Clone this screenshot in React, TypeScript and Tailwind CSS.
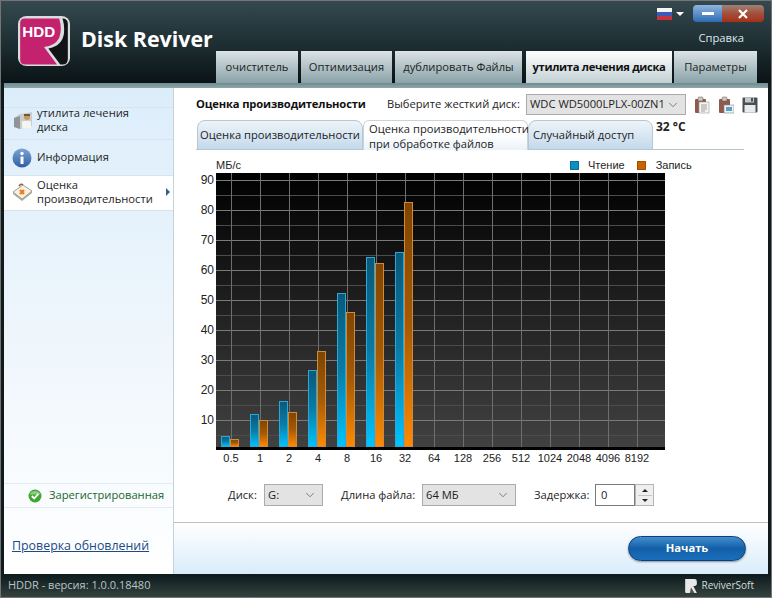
import { ChevronDown } from 'lucide-react'

const topTabs = [
  { label: 'очиститель', cls: 'w-[82px]' },
  { label: 'Оптимизация', cls: 'w-[91px] ml-[3px]' },
  { label: 'дублировать Файлы', cls: 'w-[127px] ml-[3px]' },
  { label: 'утилита лечения диска', cls: 'w-[146px] ml-[4px]', active: true },
  { label: 'Параметры', cls: 'w-[83px] ml-[2px]' },
]

const xLabels = ['0.5', '1', '2', '4', '8', '16', '32', '64', '128', '256', '512', '1024', '2048', '4096', '8192']
const yLabels = [90, 80, 70, 60, 50, 40, 30, 20, 10]

// y-координаты верха столбиков: чтение, запись
const bars: [number, number][] = [
  [436, 439],
  [414, 420],
  [401, 412],
  [370, 351],
  [293, 312],
  [257, 263],
  [252, 202],
]

function Logo() {
  return (
    <svg viewBox="9 6 48 50" preserveAspectRatio="none" className="w-[52px] h-[50px] shrink-0">
      <rect x="9" y="6" width="48" height="50" rx="8" fill="#d9dcdc" />
      <path d="M15 8.500Q11 8.500 11 13L11 50Q11 54.500 16 54.500L45 54.500L33 37Q43 36 47 28Q50 19 47 8.500Z" fill="#c4226f" />
      <path d="M50 8.500Q55 8.500 55 14L55 49Q55 54.500 50 54.500L48 54.500L37 38.500Q50 36 51.500 23Q52 14 50 8.500Z" fill="#101416" />
      <text x="13" y="27.500" fontSize="14" fontWeight="700" fill="#fff" fontFamily="'Liberation Sans', sans-serif">HDD</text>
    </svg>
  )
}

function FlagRu() {
  return (
    <svg viewBox="0 0 15 12" className="w-[15px] h-[12px]">
      <rect width="15" height="4" fill="#f4f4f4" />
      <rect y="4" width="15" height="4" fill="#3a5ab8" />
      <rect y="8" width="15" height="4" fill="#c8323c" />
    </svg>
  )
}

function DriveIcon() {
  return (
    <svg viewBox="0 0 22 22" className="w-[22px] h-[22px]">
      <path d="M2 9L8 5L20 3L20 17L8 20L2 18Z" fill="#c9cdd0" />
      <path d="M2 9L8 7L8 20L2 18Z" fill="#8f9498" />
      <rect x="10" y="12" width="9" height="7" rx="1" fill="#f4f4f0" />
      <circle cx="15" cy="8" r="3" fill="#c99a5c" />
      <rect x="12" y="5" width="6" height="2" fill="#6d5a3c" />
    </svg>
  )
}

function InfoIcon() {
  return (
    <svg viewBox="0 0 20 20" className="w-[20px] h-[20px]">
      <defs>
        <linearGradient id="infoBg" x1="0" y1="0" x2="0" y2="1">
          <stop offset="0" stopColor="#7da5d4" />
          <stop offset="1" stopColor="#2c5fa3" />
        </linearGradient>
      </defs>
      <circle cx="10" cy="10" r="9.500" fill="url(#infoBg)" />
      <circle cx="10" cy="5.500" r="1.700" fill="#fff" />
      <rect x="8.500" y="8.500" width="3" height="7.500" rx="0.500" fill="#fff" />
    </svg>
  )
}

function AidIcon() {
  return (
    <svg viewBox="0 0 22 22" className="w-[22px] h-[22px]">
      <path d="M7 5Q9 2 11 4" fill="none" stroke="#a05a30" strokeWidth="1.500" />
      <path d="M1 11L11 4L20 10L10 18Z" fill="#f6f2e6" stroke="#8a8a7a" strokeWidth="0.800" />
      <path d="M1 11L10 18L20 10L20 12L10 20L1 13Z" fill="#a8a89a" />
      <path d="M8 9L12 13M12 9L8 13" stroke="#ee7a1c" strokeWidth="2.400" />
    </svg>
  )
}

function CheckIcon() {
  return (
    <svg viewBox="0 0 14 14" className="w-[14px] h-[14px]">
      <circle cx="7" cy="7" r="6.500" fill="#3fa535" />
      <path d="M1.500 5.500A6 6 0 0 1 12.500 5.500Z" fill="#8bd07c" />
      <path d="M3.800 7L6.200 9.400L10.400 4.800" fill="none" stroke="#fff" strokeWidth="1.800" />
    </svg>
  )
}

function ClipDoc({ image }: { image?: boolean }) {
  return (
    <svg viewBox="0 0 16 18" className="w-[16px] h-[18px]">
      <rect x="1" y="3" width="11" height="14" rx="1" fill="#8f5a4c" />
      <rect x="4" y="1" width="5" height="4" rx="1" fill="#c8c8c0" stroke="#6a5a50" strokeWidth="0.500" />
      {image ? (
        <>
          <rect x="6" y="9" width="10" height="8" fill="#eef2f4" stroke="#7b8a90" strokeWidth="0.600" />
          <rect x="8" y="11" width="6" height="4" fill="#5aa0c8" />
        </>
      ) : (
        <>
          <rect x="5" y="6" width="10" height="11" fill="#f4f4f2" stroke="#9a9a9a" strokeWidth="0.600" />
          <path d="M7 9H13M7 11H13M7 13H13M7 15H11" stroke="#8a8a8a" strokeWidth="0.800" />
        </>
      )}
    </svg>
  )
}

function SaveIcon() {
  return (
    <svg viewBox="0 0 16 16" className="w-[16px] h-[16px]">
      <rect x="0.500" y="0.500" width="15" height="15" rx="1" fill="#4a4e52" />
      <rect x="3" y="0.500" width="9" height="5" fill="#c4c8cc" />
      <rect x="9" y="1" width="2" height="3.500" fill="#4a4e52" />
      <rect x="2.500" y="8" width="11" height="7.500" fill="#e8eaec" />
    </svg>
  )
}

function Chart() {
  const vLines = xLabels.map((_, i) => 231 + i * 29)
  const hLines = Array.from({ length: 18 }, (_, i) => 180 + i * 15)
  return (
    <svg viewBox="196 173 474 293" className="w-[474px] h-[293px] block">
      <defs>
        <linearGradient id="plotBg" x1="0" y1="0" x2="0" y2="1">
          <stop offset="0" stopColor="#000" />
          <stop offset="1" stopColor="#424242" />
        </linearGradient>
        <linearGradient id="readBar" x1="0" y1="0" x2="0" y2="1">
          <stop offset="0" stopColor="#0a5878" />
          <stop offset="0.5" stopColor="#0a7ba6" />
          <stop offset="1" stopColor="#00c4ff" />
        </linearGradient>
        <linearGradient id="writeBar" x1="0" y1="0" x2="0" y2="1">
          <stop offset="0" stopColor="#7f4500" />
          <stop offset="0.5" stopColor="#a55a05" />
          <stop offset="1" stopColor="#ff8a00" />
        </linearGradient>
      </defs>
      <rect x="216" y="173" width="449" height="277" fill="url(#plotBg)" />
      {hLines.map((y, i) => (
        <line key={y} x1="216" x2="665" y1={y + 0.5} y2={y + 0.5} stroke={i % 2 === 0 ? '#7a7a7a' : '#4c4c4c'} />
      ))}
      {vLines.map((x) => (
        <line key={x} x1={x + 0.5} x2={x + 0.5} y1="173" y2="447" stroke="#6e6e6e" />
      ))}
      <rect x="216" y="447" width="449" height="3" fill="#000" />
      {bars.map(([read, write], i) => {
        const x = 221 + i * 29
        return (
          <g key={i}>
            <rect x={x + 0.5} y={read + 0.5} width="8" height={446 - read} fill="url(#readBar)" stroke="#2aa9d8" />
            <rect x={x + 9.5} y={write + 0.5} width="8" height={446 - write} fill="url(#writeBar)" stroke="#d08a3a" />
          </g>
        )
      })}
      <g fontFamily="'Liberation Sans', sans-serif" fill="#222">
        {yLabels.map((v, i) => (
          <text key={v} x="214" y={184 + i * 30} fontSize="12" textAnchor="end">{v}</text>
        ))}
        {xLabels.map((l, i) => (
          <text key={l} x={231 + i * 29} y="462" fontSize="11" textAnchor="middle">{l}</text>
        ))}
      </g>
    </svg>
  )
}

function Combo({ value, cls }: { value: string; cls: string }) {
  return (
    <div className={`flex items-center justify-between bg-[#e3e3e3] border border-[#ababab] pl-[3px] pr-[5px] ${cls}`}>
      <span className="overflow-hidden whitespace-nowrap">{value}</span>
      <ChevronDown className="w-[14px] h-[14px] text-[#555] shrink-0" strokeWidth={1.200} />
    </div>
  )
}

export default function App() {
  return (
    <div className="w-[772px] h-[598px] flex flex-col bg-[#10191b] border border-[#747474] px-[3px] overflow-hidden text-[11.2px] text-[#1e1e1e] font-['Open_Sans',sans-serif]">
      {/* Шапка */}
      <div className="h-[82px] flex -mx-[3px] px-[3px] bg-gradient-to-b from-[#34494f] via-[#1f3034] to-[#0a1315]">
        <div className="w-[212px] flex items-start pl-[14px] pt-[15px]">
          <Logo />
          <span className="ml-[11px] mt-[7px] text-[21.4px] leading-[32px] font-bold text-white whitespace-nowrap">Disk Reviver</span>
        </div>
        <div className="flex-1 flex flex-col">
          <div className="flex items-center justify-end pt-[4px] pr-[4px] h-[21px]">
            <FlagRu />
            <span className="ml-[4px] mr-[9px] border-x-[4px] border-t-[4px] border-x-transparent border-t-white" />
            <div className="w-[29px] h-[17px] flex items-center justify-center rounded-l-sm bg-gradient-to-b from-[#8fb4dc] to-[#2a6cb4]">
              <span className="w-[12px] h-[3px] bg-white" />
            </div>
            <div className="w-[42px] h-[17px] flex items-center justify-center rounded-r-sm bg-gradient-to-b from-[#a08078] via-[#a0503c] to-[#a82c14]">
              <svg viewBox="0 0 10 10" className="w-[10px] h-[10px]">
                <path d="M1 1L9 9M9 1L1 9" stroke="#fff" strokeWidth="2.200" />
              </svg>
            </div>
          </div>
          <div className="text-right pr-[24px] mt-[7px] leading-[18px] text-[#dfe8ea]">Справка</div>
          <div className="flex mt-auto">
            {topTabs.map((t) => (
              <div
                key={t.label}
                className={`h-[32px] flex items-center justify-center whitespace-nowrap ${t.cls} ${
                  t.active
                    ? 'font-bold text-[#111] bg-gradient-to-b from-white to-[#c2d0d4] tracking-[-0.3px]'
                    : 'bg-gradient-to-b from-[#dbe3e5] to-[#8aa3a9]'
                }`}
              >
                {t.label}
              </div>
            ))}
          </div>
        </div>
      </div>
      <div className="h-[5px] shrink-0 bg-gradient-to-b from-[#6f8b90] to-[#8fa7ab]" />

      {/* Содержимое */}
      <div className="h-[486px] flex bg-white">
        <div className="w-[170px] shrink-0 flex flex-col border-r border-[#c3d3dd] bg-gradient-to-b from-[#dcedfa] via-[#eef6fc] to-white">
          <div className="mt-[19px] h-[33px] flex items-center border-y border-[#d6e4ee] pl-[8px] pb-[7px]">
            <DriveIcon />
            <span className="ml-[3px] leading-[14px]">утилита лечения<br />диска</span>
          </div>
          <div className="h-[36px] flex items-center border-b border-[#d6e4ee] pl-[8px]">
            <InfoIcon />
            <span className="ml-[5px]">Информация</span>
          </div>
          <div className="h-[35px] flex items-center border-b border-[#d6e4ee] pl-[8px] pr-[3px] pb-[2px] bg-white">
            <AidIcon />
            <span className="ml-[3px] leading-[14px] flex-1">Оценка<br />производительности</span>
            <span className="border-y-[4px] border-l-[4px] border-y-transparent border-l-[#2c5f92]" />
          </div>
          <div className="mt-[272px] h-[25px] flex items-center border-y border-[#e0ebf2] pl-[24px]">
            <CheckIcon />
            <span className="ml-[7px] text-[#20662c]">Зарегистрированная</span>
          </div>
          <a className="mt-[29px] ml-[8px] text-[12.400px] leading-[18px] text-[#1c4a86] underline whitespace-nowrap">Проверка обновлений</a>
        </div>

        <div className="flex-1 flex flex-col min-w-0">
          <div className="flex-1 pl-[22px]">
            <div className="flex items-center h-[21px] mt-[6px]">
              <span className="font-bold text-[#111] w-[191px] whitespace-nowrap tracking-[-0.15px]">Оценка производительности</span>
              <span className="w-[139px] whitespace-nowrap">Выберите жесткий диск:</span>
              <Combo value="WDC WD5000LPLX-00ZN1" cls="w-[160px] h-[21px]" />
              <div className="flex items-center gap-[8px] ml-[8px]">
                <ClipDoc />
                <ClipDoc image />
                <SaveIcon />
              </div>
            </div>

            <div className="mt-[5px] h-[30px] w-[548px] flex border-b border-[#b8c4cc] pl-[1px]">
              <div className="w-[166px] h-[30px] flex items-center justify-center rounded-t-lg border border-[#b6c6d2] bg-gradient-to-b from-[#eef4f9] to-[#c4d9eb] whitespace-nowrap">
                Оценка производительности
              </div>
              <div className="w-[165px] h-[30px] rounded-t-md border-x border-t border-[#c8d4dc] bg-gradient-to-b from-white via-white to-[#eaf2f8] pl-[5px] leading-[15px] whitespace-nowrap">
                Оценка производительности<br />при обработке файлов
              </div>
              <div className="w-[125px] h-[30px] flex items-center pl-[4px] rounded-t-lg border border-[#b6c6d2] bg-gradient-to-b from-[#eef4f9] to-[#c4d9eb]">
                Случайный доступ
              </div>
              <span className="ml-[3px] text-[12px] font-bold text-[#222] leading-[14px]">32 °C</span>
            </div>

            <div className="mt-[7px] h-[16px] flex items-center pl-[20px] text-[11px] font-['Liberation_Sans',sans-serif]">
              <span>МБ/с</span>
              <span className="ml-[329px] w-[9px] h-[9px] bg-[#0a8fc0] border border-[#0a6f9a]" />
              <span className="ml-[9px]">Чтение</span>
              <span className="ml-[12px] w-[9px] h-[9px] bg-[#c86400] border border-[#a05000]" />
              <span className="ml-[10px]">Запись</span>
            </div>
            <Chart />

            <div className="mt-[18px] h-[22px] flex items-center pl-[32px]">
              <span className="w-[36px]">Диск:</span>
              <Combo value="G:" cls="w-[59px] h-[22px]" />
              <span className="ml-[18px] w-[81px] whitespace-nowrap">Длина файла:</span>
              <Combo value="64 МБ" cls="w-[94px] h-[22px]" />
              <span className="ml-[18px] w-[61px] whitespace-nowrap">Задержка:</span>
              <div className="w-[40px] h-[22px] border border-[#7a7a7a] flex items-center pl-[5px]">0</div>
              <div className="w-[19px] h-[22px] border border-[#b5b5b5] flex flex-col items-center justify-around bg-[#efefef] py-[2px]">
                <span className="border-x-[3px] border-b-[3px] border-x-transparent border-b-[#222]" />
                <span className="w-[14px] h-px bg-[#c4c4c4]" />
                <span className="border-x-[3px] border-t-[3px] border-x-transparent border-t-[#222]" />
              </div>
            </div>
          </div>

          <div className="h-[52px] shrink-0 flex items-center justify-end pr-[22px] border-t border-[#c0c0c0] bg-gradient-to-b from-white to-[#d9ecfa]">
            <div className="w-[118px] h-[25px] rounded-full border border-[#0d3f7a] bg-gradient-to-b from-[#3f8ed0] via-[#135fa8] to-[#1a6fbc] flex items-center justify-center text-white font-bold shadow-[0_1px_2px_rgba(0,0,0,0.4)]">
              Начать
            </div>
          </div>
        </div>
      </div>

      {/* Статус */}
      <div className="flex-1 flex items-center justify-between -mx-[3px] pl-[7px] pr-[17px] bg-gradient-to-b from-[#0e1a1c] to-[#33423f] text-[#b9c5c7]">
        <span className="text-[11px]">HDDR - версия: 1.0.0.18480</span>
        <span className="flex items-center gap-[5px] text-[10px] font-medium text-[#d4dcdd]">
          <svg viewBox="0 0 10 12" className="w-[12px] h-[14px]">
            <path d="M0 0H8Q10 0 10 2V4Q10 6 7 6L10 12H1Q0 12 0 11Z" fill="#e8e8e8" />
            <path d="M5 7L8 12H4Z" fill="#555" />
          </svg>
          ReviverSoft
        </span>
      </div>
    </div>
  )
}
